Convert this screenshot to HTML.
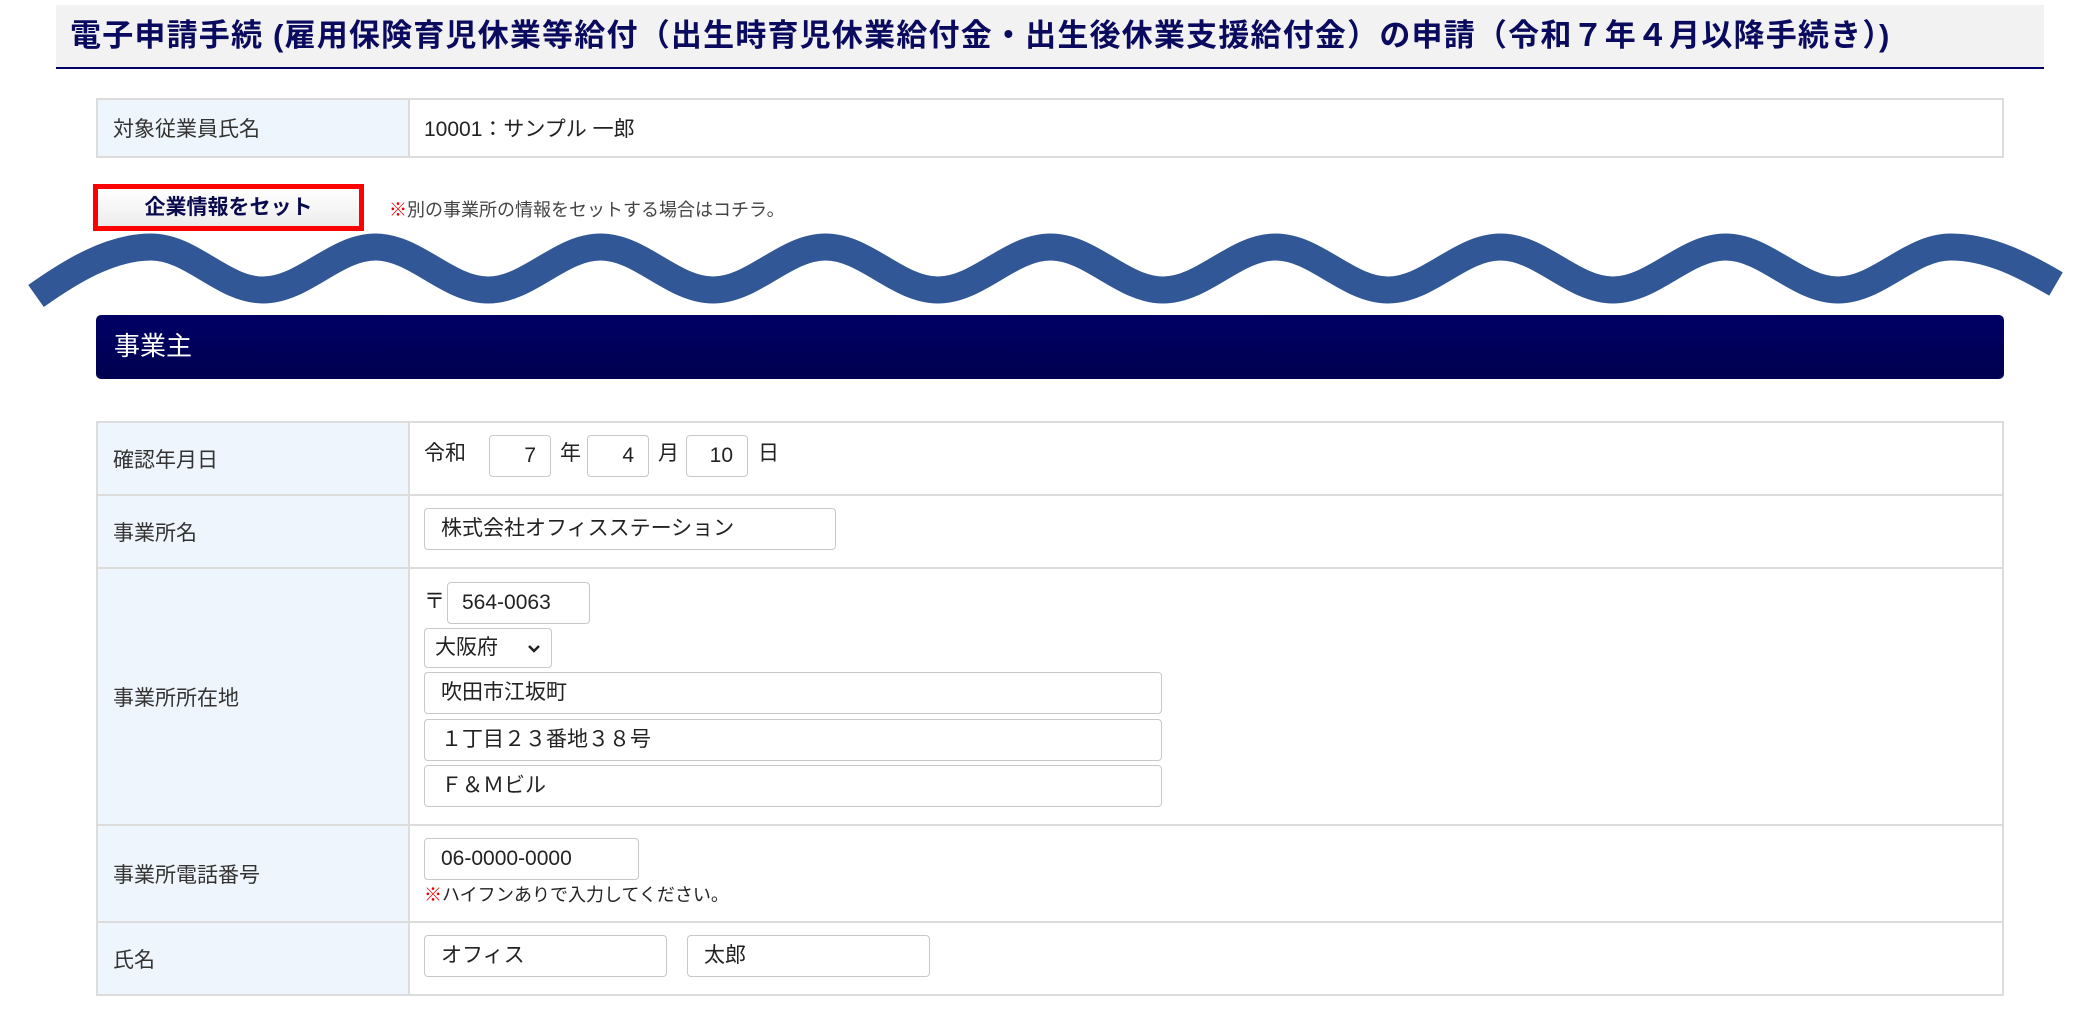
<!DOCTYPE html>
<html><head><meta charset="utf-8"><style>
*{box-sizing:border-box;margin:0;padding:0}
body{width:2084px;height:1022px;background:#fff;position:relative;overflow:hidden;font-family:"Liberation Sans","Noto Sans CJK JP",sans-serif;color:#222}
.abs{position:absolute}
.title{left:56px;top:5px;width:1988px;height:64px;background:#f2f2f2;border-bottom:2px solid #000066;font-size:31px;font-weight:bold;color:#0a0a5e;padding-left:14px;line-height:62px;white-space:nowrap;letter-spacing:1.2px}
table{position:absolute;border-collapse:collapse;left:96px;width:1908px}
td{border:2px solid #dcdcdc;font-size:21px}
td.l{background:#eef5fc;width:312px;padding-left:15px;color:#333}
.inp{position:absolute;border:1px solid #c8c8c8;border-radius:4px;background:#fff;font-size:21px;padding-left:16px;line-height:40px;height:42px;color:#222}
.t{position:absolute;font-size:21px;line-height:24px}
.btnwrap{left:93px;top:184px;width:271px;height:47px;border:5px solid #f00}
.btn{width:100%;height:100%;background:linear-gradient(#fff,#ececec);text-align:center;font-weight:bold;font-size:21px;line-height:37px;color:#0a0a4e}
.note{left:389px;top:196px;font-size:18px;color:#444}
.red{color:#e00}
.head{left:96px;top:315px;width:1908px;height:64px;border-radius:5px;background:linear-gradient(#000066,#00004f);color:#fff;font-size:26px;padding-left:18px;line-height:62px}
</style></head><body>
<div class="abs title">電子申請手続 (雇用保険育児休業等給付（出生時育児休業給付金・出生後休業支援給付金）の申請（令和７年４月以降手続き）)</div>

<table style="top:98px;height:60px"><tr><td class="l">対象従業員氏名</td><td style="padding-left:14px">10001：サンプル 一郎</td></tr></table>

<div class="abs btnwrap"><div class="btn">企業情報をセット</div></div>
<div class="abs note"><span class="red">※</span>別の事業所の情報をセットする場合はコチラ。</div>

<svg class="abs" style="left:0;top:0" width="2084" height="330">
<path fill="none" stroke="#315796" stroke-width="27" d="M36,296 C70,272 110,247 151,247 S222.5,290 263,290 S335,247 375.5,247 S447.5,290 488,290 S560,247 600.5,247 S672.5,290 713,290 S785,247 825.5,247 S897.5,290 938,290 S1010,247 1050.5,247 S1122.5,290 1163,290 S1235,247 1275.5,247 S1347.5,290 1388,290 S1460,247 1500.5,247 S1572.5,290 1613,290 S1685,247 1725.5,247 S1797.5,290 1838,290 S1910,247 1950.5,247 C1990,247 2025,266 2056,284"/>
</svg>

<div class="abs head">事業主</div>

<table style="top:421px">
<tr style="height:73px"><td class="l">確認年月日</td><td></td></tr>
<tr style="height:73px"><td class="l">事業所名</td><td></td></tr>
<tr style="height:257px"><td class="l">事業所所在地</td><td></td></tr>
<tr style="height:97px"><td class="l">事業所電話番号</td><td></td></tr>
<tr style="height:73px"><td class="l">氏名</td><td></td></tr>
</table>

<div class="t" style="left:424px;top:442px">令和</div>
<div class="inp" style="left:489px;top:435px;width:62px;text-align:right;padding-right:14px">7</div>
<div class="t" style="left:560px;top:442px">年</div>
<div class="inp" style="left:587px;top:435px;width:62px;text-align:right;padding-right:14px">4</div>
<div class="t" style="left:658px;top:442px">月</div>
<div class="inp" style="left:686px;top:435px;width:62px;text-align:right;padding-right:14px">10</div>
<div class="t" style="left:758px;top:442px">日</div>

<div class="inp" style="left:424px;top:508px;width:412px">株式会社オフィスステーション</div>

<div class="t" style="left:424px;top:590px">〒</div>
<div class="inp" style="left:447px;top:582px;width:143px;padding-left:14px">564-0063</div>
<div class="inp" style="left:424px;top:628px;width:128px;height:40px;line-height:38px;padding-left:10px">大阪府<svg style="position:absolute;right:10px;top:15px" width="14" height="10"><path d="M2,2 L7,7 L12,2" fill="none" stroke="#222" stroke-width="2.5"/></svg></div>
<div class="inp" style="left:424px;top:672px;width:738px">吹田市江坂町</div>
<div class="inp" style="left:424px;top:719px;width:738px">１丁目２３番地３８号</div>
<div class="inp" style="left:424px;top:765px;width:738px">Ｆ＆Ｍビル</div>

<div class="inp" style="left:424px;top:838px;width:215px">06-0000-0000</div>
<div class="t" style="left:424px;top:883px;font-size:18px"><span class="red">※</span>ハイフンありで入力してください。</div>

<div class="inp" style="left:424px;top:935px;width:243px">オフィス</div>
<div class="inp" style="left:687px;top:935px;width:243px">太郎</div>
</body></html>
